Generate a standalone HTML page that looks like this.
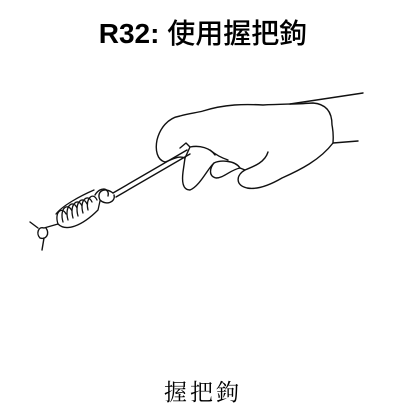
<!DOCTYPE html>
<html><head><meta charset="utf-8"><style>
html,body{margin:0;padding:0;background:#fff;width:406px;height:416px;overflow:hidden}
.t{position:absolute;left:0;width:406px;text-align:center;color:#000}
</style></head><body>
<div class="t" style="top:12px;font:bold 28px 'Liberation Sans','Noto Sans CJK TC',sans-serif">R32: <span style="font-weight:500">使用握把鉤</span></div>
<svg width="406" height="416" style="position:absolute;left:0;top:0" fill="none" stroke="#111" stroke-width="1.4" stroke-linecap="round" stroke-linejoin="round">
<path d="M290 104 L363 93"/>
<path d="M333 143 L358 141"/>
<path d="M203 111 C225 104 245 104 263 105 C285 104 300 104 313 103 C326 104 332 112 332 125 C334 135 333 140 333 143 C320 160 300 170 282 178 C270 185 258 190 247 188 C235 185 236 175 245 170 L240 168 C230 170 224 178 216 178 C208 176 210 168 214 163 C208 168 200 186 190 190 C182 190 182 180 183 172 L185 158 C178 155 172 160 165 162 C157 160 155 150 157 140 C160 128 168 118 180 116 C190 113 196 113 203 111"/>
<path d="M185 158 L190 147 L186 143 L180 148"/>
<path d="M190 147 C200 145 210 148 215 155"/>
<path d="M214 163 C220 160 235 160 240 168"/>
<path d="M210 150 C216 155 222 158 228 160"/>
<path d="M245 170 C255 166 265 162 268 152"/>
<path d="M113 193 L187 150 M116 197 L190 154"/>
<path d="M113 193 C104 186 96 192 100 200 C106 206 116 202 114 195"/>
<path d="M95 195 C100 186 110 188 108 196"/>
<g stroke-width="1.3">
<path d="M58 224 C54 212 62 206 66 214 M63 222 C59 208 68 202 72 211 M68 220 C64 206 73 199 77 208 M73 218 C69 204 78 197 82 206 M78 216 C74 202 83 195 87 204 M83 213 C79 200 88 193 92 202 M88 210 C85 199 93 191 97 200"/>
<path d="M58 224 C66 232 82 226 98 210 L100 201"/>
<path d="M56 214 C62 206 80 196 94 190"/>
</g>
<path d="M58 224 L44 228 C38 226 36 234 40 238 C46 240 50 234 46 228"/>
<path d="M44 238 L42 250 M38 228 L30 222"/>
</svg>
<div class="t" style="top:374px;font:23px 'Noto Serif CJK SC','Noto Sans CJK TC',serif;letter-spacing:3px">握把鉤</div>
</body></html>
